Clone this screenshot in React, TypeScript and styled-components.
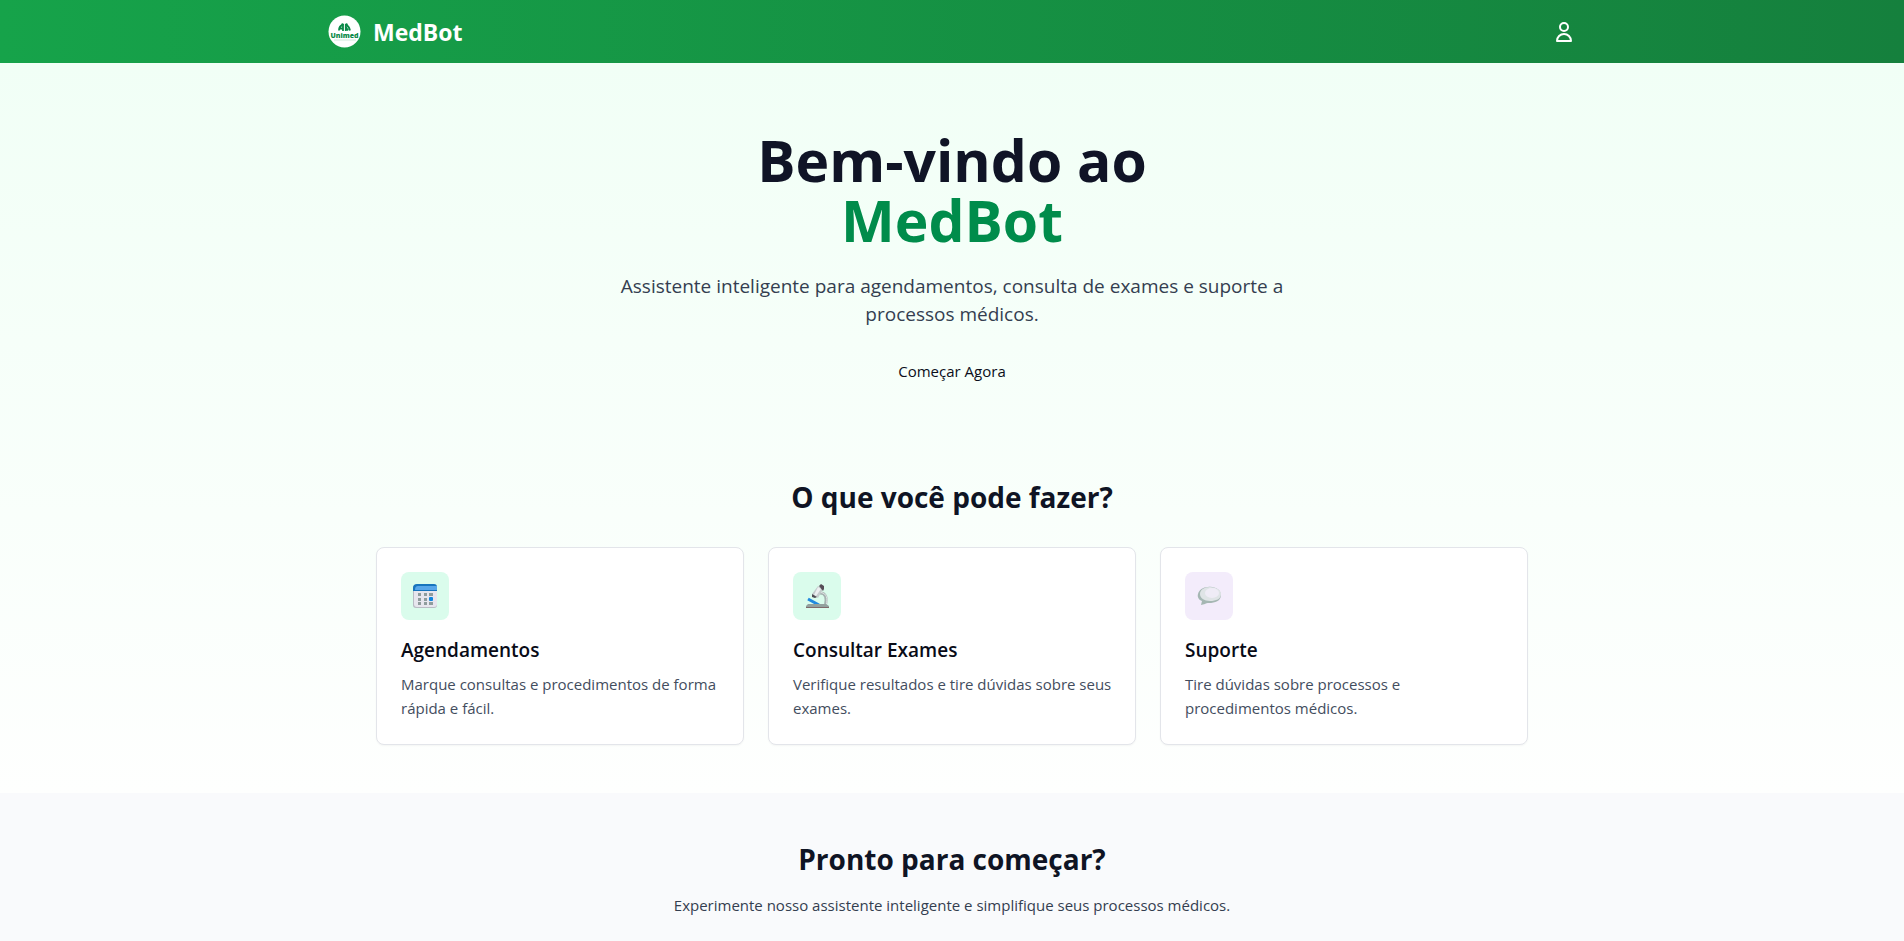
import React from 'react';
import styled, { createGlobalStyle } from 'styled-components';

const GlobalStyle = createGlobalStyle`
  *, *::before, *::after { box-sizing: border-box; }
  body {
    margin: 0;
    background: #f9fafc;
    color: #0f1424;
    font-family: 'Segoe UI', 'Open Sans', 'Noto Sans', sans-serif;
    font-size: 15px;
    line-height: 24px;
  }
  h1, h2, h3, p { margin: 0; }
`;

const Header = styled.header`
  background: linear-gradient(to right, #16a34a, #15803d);
  color: #fff;
`;

const HeaderInner = styled.div`
  display: flex;
  align-items: center;
  justify-content: space-between;
  max-width: 1280px;
  margin: 0 auto;
  padding: 15px 16px;
`;

const Brand = styled.a`
  display: flex;
  align-items: center;
  gap: 12px;
  color: inherit;
  font-size: 23px;
  font-weight: 700;
  line-height: 32px;
  text-decoration: none;
`;

const AccountButton = styled.button`
  display: flex;
  padding: 0;
  border: 0;
  background: none;
  color: inherit;
  cursor: pointer;
`;

const Main = styled.main`
  background: linear-gradient(to bottom, #f1fff6, #fefffe);
`;

const Hero = styled.section`
  display: flex;
  flex-direction: column;
  align-items: center;
  padding: 67px 16px 48px;
  text-align: center;
`;

const HeroTitle = styled.h1`
  font-size: 57px;
  font-weight: 700;
  line-height: 60px;
  color: #101426;
`;

const Highlight = styled.span`
  display: block;
  color: #008c4b;
`;

const HeroText = styled.p`
  max-width: 672px;
  margin: 22px 0 31px;
  font-size: 19px;
  line-height: 28px;
  color: #343e50;
`;

const StartButton = styled.button`
  padding: 0;
  border: 0;
  background: none;
  color: #0b0e1a;
  font: inherit;
  cursor: pointer;
`;

const Features = styled.section`
  max-width: 1184px;
  margin: 0 auto;
  padding: 48px 16px;
`;

const SectionTitle = styled.h2`
  font-size: 28px;
  font-weight: 700;
  line-height: 36px;
  text-align: center;
  color: #0f1424;
`;

const CardGrid = styled.div`
  display: grid;
  grid-template-columns: repeat(auto-fit, minmax(280px, 1fr));
  gap: 24px;
  margin-top: 32px;
`;

const Card = styled.article`
  padding: 24px 20px 24px 24px;
  border: 1px solid #e3e5ea;
  border-radius: 8px;
  background: #fff;
  box-shadow: 0 1px 2px rgba(0, 0, 0, 0.04);
`;

const IconTile = styled.div<{ $tint: string }>`
  display: grid;
  place-items: center;
  width: 48px;
  height: 48px;
  margin-bottom: 16px;
  border-radius: 8px;
  background: ${({ $tint }) => $tint};
`;

const CardTitle = styled.h3`
  margin-bottom: 8px;
  font-size: 19px;
  font-weight: 600;
  line-height: 28px;
  color: #090b17;
`;

const CardText = styled.p`
  color: #434d5e;
`;

const CallToAction = styled.section`
  padding: 48px 16px 24px;
  background: #f9fafc;
  text-align: center;
`;

const CallText = styled.p`
  margin-top: 16px;
  color: #343e50;
`;

const LogoWord = styled.text`
  font-size: 7px;
  font-weight: 800;
`;

const Logo = () => (
  <svg width="33" height="33" viewBox="0 0 33 33" aria-hidden="true">
    <circle cx="16.5" cy="16.5" r="16" fill="#fff" />
    <g fill="none" stroke="#0a8a48" strokeWidth="1.8">
      <path d="M11 15.500c0-3 1.500-5 4-5.500v6M11.500 13.500h3" />
      <path d="M17.800 16v-6c2.500.5 3.500 2.500 4.200 5.500M18 12.500l2 3" />
    </g>
    <g fill="#0a8a48">
      <circle cx="14.500" cy="9.400" r="1.200" />
      <circle cx="18.500" cy="9.400" r="1.200" />
      <path d="M6 24.600h22v.8H6z" opacity=".25" />
      <LogoWord x="16.5" y="22.8" textAnchor="middle">Unimed</LogoWord>
    </g>
  </svg>
);

const UserIcon = () => (
  <svg width="24" height="24" viewBox="0 0 24 24" fill="none" stroke="currentColor" strokeWidth="2" strokeLinecap="round" strokeLinejoin="round" aria-hidden="true">
    <path d="M16 7a4 4 0 11-8 0 4 4 0 018 0zM12 14a7 7 0 00-7 7h14a7 7 0 00-7-7z" />
  </svg>
);

const CalendarIcon = () => (
  <svg width="26" height="26" viewBox="0 0 26 26" aria-hidden="true">
    <rect x="1" y="2" width="24" height="23" rx="3" fill="#b9bcc5" />
    <rect x="2" y="3" width="23" height="21" rx="3" fill="#e7e6ee" />
    <path d="M1 8V5a4 4 0 0 1 4-4h17a3 3 0 0 1 3 3v4z" fill="#1674bd" />
    <path d="M3 7c0-3 1-4 3-4h19v4z" fill="#56a6ea" />
    <path d="M6 10h3v3H6zM12 10h3v3h-3zM17 10h4v3h-4zM6 15h3v3H6zM12 15h3v3h-3zM6 19h3v3H6zM12 19h3v3h-3zM17 19h4v3h-4z" fill="#8f9c9d" />
    <rect x="17" y="14" width="4" height="4" rx="1" fill="#0f86dd" />
  </svg>
);

const MicroscopeIcon = () => (
  <svg width="26" height="26" viewBox="0 0 26 26" aria-hidden="true">
    <path d="M16 10c6 0 7 5 5.500 12" fill="none" stroke="#a5b3b0" strokeWidth="3" />
    <path d="M17 9.500c6 1 6.500 6 5.500 12" fill="none" stroke="#e3e6e8" strokeWidth="1" />
    <path d="M4 16l11 6" stroke="#2189df" strokeWidth="3" />
    <path d="M2 25v-2l2-2h18l3 2v2z" fill="#93a19e" />
    <path d="M2 24.500h23" stroke="#80696b" />
    <path d="M14 3l5 3-5 9-6-4z" fill="#c4cbcc" />
    <path d="M14 4l3 2-5 7-2-1z" fill="#eceff1" />
    <path d="M15 3l2-2 3 2v3l-1 2z" fill="#564d57" />
    <path d="M8 11l5 3-2 1-3-1z" fill="#4e4b54" />
  </svg>
);

const SpeechIcon = () => (
  <svg width="26" height="26" viewBox="0 0 26 26" aria-hidden="true">
    <path d="M12 4c7-1 13 3 13 8 0 6-6 8-12 8-2 0-3 0-4 1l-4 1 1-4c-3-1-5-4-4-7 1-4 5-7 10-7z" fill="#a5b7b3" />
    <path d="M14 4c6 0 11 3 11 7 0 5-5 7-11 7S4 15 4 11s4-7 10-7z" fill="#dfe4e6" />
    <ellipse cx="16" cy="10" rx="7" ry="5" fill="#efecf6" />
  </svg>
);

const features = [
  {
    title: 'Agendamentos',
    text: 'Marque consultas e procedimentos de forma rápida e fácil.',
    tint: '#dafcec',
    icon: <CalendarIcon />,
  },
  {
    title: 'Consultar Exames',
    text: 'Verifique resultados e tire dúvidas sobre seus exames.',
    tint: '#dafcec',
    icon: <MicroscopeIcon />,
  },
  {
    title: 'Suporte',
    text: 'Tire dúvidas sobre processos e procedimentos médicos.',
    tint: '#f3ecfb',
    icon: <SpeechIcon />,
  },
];

export default function App() {
  return (
    <>
      <GlobalStyle />
      <Header>
        <HeaderInner>
          <Brand href="#">
            <Logo />
            MedBot
          </Brand>
          <AccountButton type="button" aria-label="Conta">
            <UserIcon />
          </AccountButton>
        </HeaderInner>
      </Header>
      <Main>
        <Hero>
          <HeroTitle>
            Bem-vindo ao <Highlight>MedBot</Highlight>
          </HeroTitle>
          <HeroText>
            Assistente inteligente para agendamentos, consulta de exames e suporte a processos médicos.
          </HeroText>
          <StartButton type="button">Começar Agora</StartButton>
        </Hero>
        <Features>
          <SectionTitle>O que você pode fazer?</SectionTitle>
          <CardGrid>
            {features.map((feature) => (
              <Card key={feature.title}>
                <IconTile $tint={feature.tint}>{feature.icon}</IconTile>
                <CardTitle>{feature.title}</CardTitle>
                <CardText>{feature.text}</CardText>
              </Card>
            ))}
          </CardGrid>
        </Features>
      </Main>
      <CallToAction>
        <SectionTitle>Pronto para começar?</SectionTitle>
        <CallText>Experimente nosso assistente inteligente e simplifique seus processos médicos.</CallText>
      </CallToAction>
    </>
  );
}
